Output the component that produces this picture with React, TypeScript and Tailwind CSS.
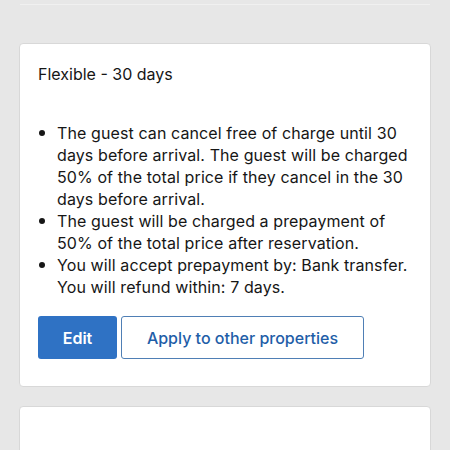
export default function App() {
  const items = [
    'The guest can cancel free of charge until 30 days before arrival. The guest will be charged 50% of the total price if they cancel in the 30 days before arrival.',
    'The guest will be charged a prepayment of 50% of the total price after reservation.',
    'You will accept prepayment by: Bank transfer. You will refund within: 7 days.',
  ];

  return (
    <div className="w-[450px] h-[450px] overflow-hidden bg-[#e7e7e7] font-['Inter',sans-serif] text-[#161616]">
      <div className="mx-[20px] h-[5px] border-b border-[#f0f0f0]" />

      <div className="mt-[38px] mx-[19px] bg-white rounded-[4px] border border-[#d8d8d8] px-[18px] pt-[19px] pb-[27px]">
        <h2 className="text-[16px] leading-[22px]">Flexible - 30 days</h2>

        <ul className="mt-[37px] text-[16px] leading-[22px] tracking-[0.1px]">
          {items.map((text) => (
            <li key={text} className="flex">
              <span className="w-[19px] shrink-0 flex pt-[8px] pl-[1px]">
                <span className="w-[6px] h-[6px] rounded-full bg-[#161616]" />
              </span>
              <span>{text}</span>
            </li>
          ))}
        </ul>

        <div className="mt-[18px] flex gap-[4px]">
          <button className="w-[79px] h-[43px] rounded-[3px] bg-[#2f72c4] text-white text-[16px] font-semibold">
            Edit
          </button>
          <button className="w-[243px] h-[43px] rounded-[3px] border border-[#4f7fb5] bg-white text-[#1f5ea8] text-[16px] font-medium">
            Apply to other properties
          </button>
        </div>
      </div>

      <div className="mt-[19px] mx-[19px] h-[60px] bg-white rounded-[4px] border border-[#d8d8d8]" />
    </div>
  );
}
